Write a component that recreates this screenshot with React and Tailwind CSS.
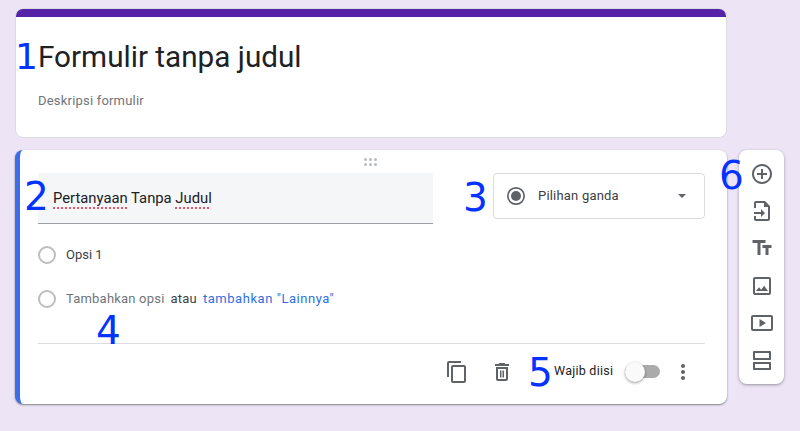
const Icon = ({ d, size = 24, className = "" }) => (
  <svg width={size} height={size} viewBox="0 0 24 24" fill="#5f6368" className={className}>
    <path d={d} />
  </svg>
);

const icons = {
  add: "M13 7h-2v4H7v2h4v4h2v-4h4v-2h-4V7zm-1-5C6.48 2 2 6.48 2 12s4.48 10 10 10 10-4.48 10-10S17.52 2 12 2zm0 18c-4.41 0-8-3.59-8-8s3.59-8 8-8 8 3.59 8 8-3.59 8-8 8z",
  importFile: "M6 2h9l5 5v13c0 1.1-.9 2-2 2H6c-1.1 0-2-.9-2-2v-3h2v3h12V8h-4V4H6v5H4V4c0-1.1.9-2 2-2zm5 8l4 4-4 4v-3H4v-2h7v-3z",
  title: "M2.5 4v3h5v12h3V7h5V4h-13zm19 5h-9v3h3v7h3v-7h3V9z",
  image: "M19 5v14H5V5h14m0-2H5c-1.1 0-2 .9-2 2v14c0 1.1.9 2 2 2h14c1.1 0 2-.9 2-2V5c0-1.1-.9-2-2-2zm-4.86 8.86l-3 3.87L9 13.14 6 17h12l-3.86-5.14z",
  video: "M21 4H3c-1.1 0-2 .9-2 2v12c0 1.1.9 2 2 2h18c1.1 0 2-.9 2-2V6c0-1.1-.9-2-2-2zm0 14H3V6h18v12zM9.5 8v8l6.5-4z",
  section: "M4 3h16c.6 0 1 .4 1 1v7c0 .6-.4 1-1 1H4c-.6 0-1-.4-1-1V4c0-.6.4-1 1-1zm1 2v5h14V5H5zm-1 9h16c.6 0 1 .4 1 1v6c0 .6-.4 1-1 1H4c-.6 0-1-.4-1-1v-6c0-.6.4-1 1-1zm1 2v4h14v-4H5z",
  copy: "M16 1H4c-1.1 0-2 .9-2 2v14h2V3h12V1zm3 4H8c-1.1 0-2 .9-2 2v14c0 1.1.9 2 2 2h11c1.1 0 2-.9 2-2V7c0-1.1-.9-2-2-2zm0 16H8V7h11v14z",
  trash: "M6 19c0 1.1.9 2 2 2h8c1.1 0 2-.9 2-2V7H6v12zM8 9h8v10H8V9zm2 1.5h1.5v7H10v-7zm2.5 0H14v7h-1.5v-7zM15.5 4l-1-1h-5l-1 1H5v2h14V4h-3.5z",
  more: "M12 8c1.1 0 2-.9 2-2s-.9-2-2-2-2 .9-2 2 .9 2 2 2zm0 2c-1.1 0-2 .9-2 2s.9 2 2 2 2-.9 2-2-.9-2-2-2zm0 6c-1.1 0-2 .9-2 2s.9 2 2 2 2-.9 2-2-.9-2-2-2z",
};

const Num = ({ children, className }) => (
  <span className={`absolute font-['DejaVu_Sans'] leading-[40px] text-[#0433ff] ${className}`}>
    {children}
  </span>
);

const Radio = () => <span className="w-[18px] h-[18px] rounded-full border-2 border-[#bdbdbd] shrink-0" />;

const App = () => {
  return (
    <div className="relative w-[800px] h-[431px] overflow-hidden bg-[#ede4f5] font-['Roboto',sans-serif] flex items-start pt-2 pl-[15px]">
      <div className="w-[712px] flex flex-col gap-[12px]">
        <div className="h-[130px] bg-white rounded-lg border border-[#dadce0] overflow-hidden">
          <div className="h-[9px] bg-[#5623a8] -mx-px -mt-px" />
          <h1 className="pl-[22px] pt-[22px] text-[29.7px] leading-[36px] text-[#202124] font-normal">Formulir tanpa judul</h1>
          <p className="pl-[22px] pt-[18px] text-[13px] leading-[16px] tracking-[0.2px] text-[#70757a]">Deskripsi formulir</p>
        </div>

        <div className="h-[254px] bg-white rounded-lg border-l-[5px] border-l-[#3b6ee8] shadow-[0_1px_2px_rgba(60,64,67,0.6)] pl-[18px] pr-[22px] flex flex-col">
          <div className="h-[23px] flex justify-center items-center pr-[2px] pt-px">
            <div className="grid grid-cols-3 gap-x-[2.5px] gap-y-[2.5px]">
              {[0, 1, 2, 3, 4, 5].map((i) => (
                <span key={i} className="w-[2.5px] h-[2.5px] rounded-full bg-[#b8bcc0]" />
              ))}
            </div>
          </div>
          <div className="flex justify-between items-start">
            <div className="w-[395px] h-[51px] bg-[#f5f6f8] border-b border-[#9aa0a6] pl-[15px] pt-[14px] text-[14.8px] leading-[22px] text-[#202124]">
              <span className="underline decoration-dotted decoration-[1.5px] decoration-[#f0506e] underline-offset-[4px]">Pertanyaan</span>{" "}
              Tanpa{" "}
              <span className="underline decoration-dotted decoration-[1.5px] decoration-[#f0506e] underline-offset-[4px]">Judul</span>
            </div>
            <div className="w-[212px] h-[46px] border border-[#dadce0] rounded-[4px] flex items-center pl-[12px] pr-[18px]">
              <svg width="20" height="20" viewBox="0 0 20 20">
                <circle cx="10" cy="10" r="8.2" fill="none" stroke="#5f6368" strokeWidth="1.7" />
                <circle cx="10" cy="10" r="5" fill="#5f6368" />
              </svg>
              <span className="ml-[12px] text-[13px] tracking-[0.2px] text-[#3c4043]">Pilihan ganda</span>
              <span className="ml-auto w-0 h-0 border-x-[4.5px] border-x-transparent border-t-[4.5px] border-t-[#5f6368]" />
            </div>
          </div>
          <div className="flex items-center mt-[22px] h-[18px]">
            <Radio />
            <span className="ml-[10px] text-[13px] text-[#3c4043]">Opsi 1</span>
          </div>
          <div className="flex items-center mt-[26px] h-[18px] text-[13px] tracking-[0.2px]">
            <Radio />
            <span className="ml-[10px] text-[#70757a]">Tambahkan opsi</span>
            <span className="ml-[6px] text-[#3c4043]">atau</span>
            <span className="ml-[6px] text-[#2f6fdf] tracking-[0.55px]">tambahkan "Lainnya"</span>
          </div>
          <div className="mt-[35px] border-t border-[#dadce0] flex items-center h-[56px]">
            <Icon d={icons.copy} className="ml-[407px]" />
            <Icon d={icons.trash} className="ml-[21px]" />
            <span className="ml-[40px] text-[12.5px] tracking-[0.25px] text-[#202124]">Wajib diisi</span>
            <div className="relative ml-[12px] w-[35px] h-[13px] rounded-full bg-[#ababab]">
              <span className="absolute left-0 -top-[3.5px] w-[20px] h-[20px] rounded-full bg-[#fafafa] shadow-[0_1px_3px_rgba(0,0,0,0.4)]" />
            </div>
            <Icon d={icons.more} className="ml-[11px]" />
          </div>
        </div>
      </div>

      <div className="ml-[12px] mt-[142px] w-[45px] h-[234px] bg-white rounded-lg shadow-[0_1px_3px_rgba(60,64,67,0.5)] flex flex-col items-center py-[12px] justify-between">
        <Icon d={icons.add} />
        <Icon d={icons.importFile} />
        <Icon d={icons.title} />
        <Icon d={icons.image} />
        <Icon d={icons.video} />
        <Icon d={icons.section} />
      </div>

      <Num className="text-[36px] left-[15px] top-[37px]">1</Num>
      <Num className="text-[39px] left-[24px] top-[177px]">2</Num>
      <Num className="text-[39px] left-[463px] top-[178px]">3</Num>
      <Num className="text-[39px] left-[96px] top-[311px]">4</Num>
      <Num className="text-[39px] left-[528px] top-[353px]">5</Num>
      <Num className="text-[39px] left-[719px] top-[156px]">6</Num>
    </div>
  );
};

export default App;
